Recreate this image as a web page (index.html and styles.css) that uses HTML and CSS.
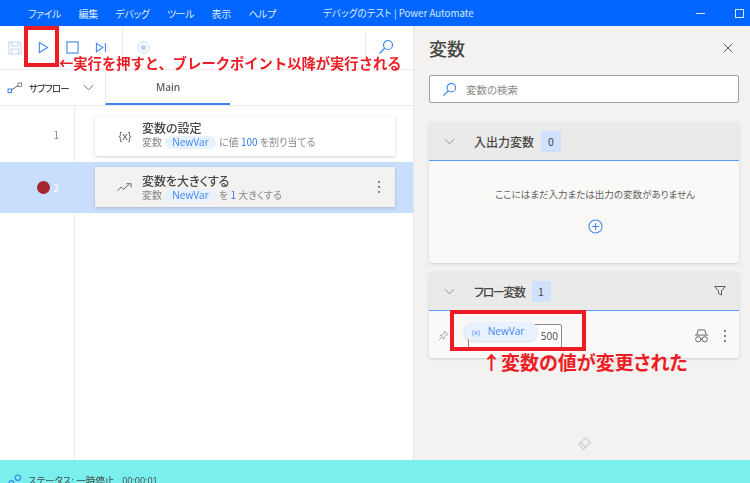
FILE: index.html
```html
<!DOCTYPE html>
<html lang="ja">
<head>
<meta charset="utf-8">
<title>デバッグのテスト | Power Automate</title>
<link rel="stylesheet" href="styles.css">
</head>
<body>
<div class="app">
  <header class="titlebar">
    <nav class="menu">
      <span>ファイル</span><span>編集</span><span>デバッグ</span><span>ツール</span><span>表示</span><span>ヘルプ</span>
    </nav>
    <div class="doc-title">デバッグのテスト | Power Automate</div>
    <div class="win-btns">
      <span class="win-min"></span>
      <span class="win-max"></span>
    </div>
  </header>
  <div class="main">
    <section class="left">
      <div class="toolbar">
        <div class="tool-group">
          <svg class="ico save" viewBox="0 0 14 14"><path d="M1 1h10l2 2v10H1z M4 1v4h6V1 M3.500 13V8h7v5" fill="none" stroke="#c9d6ea" stroke-width="1.100"/></svg>
          <svg class="ico play" viewBox="0 0 12 14"><path d="M1.500 1.500 10.500 7l-9 5.500z" fill="none" stroke="#3f86f2" stroke-width="1.200"/></svg>
          <svg class="ico stop" viewBox="0 0 14 14"><rect x="1" y="1" width="12" height="12" fill="none" stroke="#3f86f2" stroke-width="1.200"/></svg>
          <svg class="ico step" viewBox="0 0 12 12"><path d="M1 1.500 8 6l-7 4.500z M10.800 1v10" fill="none" stroke="#3f86f2" stroke-width="1.200"/></svg>
        </div>
        <div class="tool-mid">
          <svg class="ico rec" viewBox="0 0 14 14"><circle cx="7" cy="7" r="6" fill="none" stroke="#bcd3f5" stroke-width="1"/><circle cx="7" cy="7" r="3" fill="#bcd3f5"/></svg>
        </div>
        <div class="tool-search">
          <svg class="ico find" viewBox="0 0 16 16"><circle cx="10" cy="6" r="4.500" fill="none" stroke="#3f86f2" stroke-width="1.200"/><path d="M6.700 9.300 1.500 14.500" stroke="#3f86f2" stroke-width="1.300"/></svg>
        </div>
      </div>
      <div class="tabs">
        <div class="subflow">
          <svg class="ico flow" viewBox="0 0 16 12"><rect x="1" y="7" width="3.500" height="3.500" fill="none" stroke="#3f86f2"/><rect x="11" y="1" width="3.500" height="3.500" fill="none" stroke="#8a8886"/><path d="M4.500 8 11 3.500" stroke="#605e5c"/></svg>
          <span class="subflow-label">サブフロー</span>
          <svg class="chev-s" viewBox="0 0 12 7"><path d="M1 1l5 5 5-5" fill="none" stroke="#605e5c"/></svg>
        </div>
        <div class="tab-main">Main</div>
      </div>
      <div class="rows">
        <div class="row">
          <div class="num">1</div>
          <div class="cell">
            <div class="card">
              <span class="card-ico">{x}</span>
              <div class="card-text">
                <div class="card-title">変数の設定</div>
                <div class="card-sub">変数 <span class="pill">NewVar</span> に値 <b>100</b> を割り当てる</div>
              </div>
            </div>
          </div>
        </div>
        <div class="row row-sel">
          <div class="num"><i class="bp"></i>2</div>
          <div class="cell">
            <div class="card card-sel">
              <svg class="card-svg" viewBox="0 0 16 10"><path d="M.500 9l4-4 2.500 2.500L13 2 M10 1.500h5v4" fill="none" stroke="#605e5c"/></svg>
              <div class="card-text">
                <div class="card-title">変数を大きくする</div>
                <div class="card-sub">変数 <span class="pill">NewVar</span> を <b>1</b> 大きくする</div>
              </div>
              <span class="dots"><i></i><i></i><i></i></span>
            </div>
          </div>
        </div>
        <div class="row-rest">
          <div class="gutter"></div>
        </div>
      </div>
    </section>
    <aside class="right">
      <div class="panel-head">
        <h1>変数</h1>
        <svg class="close" viewBox="0 0 10 10"><path d="M.500.500l9 9M9.500.500l-9 9" stroke="#605e5c"/></svg>
      </div>
      <div class="search">
        <svg class="search-ico" viewBox="0 0 16 16"><circle cx="10" cy="6" r="4.500" fill="none" stroke="#3f86f2" stroke-width="1.200"/><path d="M6.700 9.300 1.500 14.500" stroke="#3f86f2" stroke-width="1.300"/></svg>
        <span>変数の検索</span>
      </div>
      <div class="sect">
        <div class="sect-head">
          <svg class="chev" viewBox="0 0 12 7"><path d="M1 1l5 5 5-5" fill="none" stroke="#8a8886"/></svg>
          <span class="sect-title">入出力変数</span>
          <span class="count">0</span>
        </div>
        <div class="sect-empty">
          <p>ここにはまだ入力または出力の変数がありません</p>
          <svg class="plus" viewBox="0 0 16 16"><circle cx="8" cy="8" r="7" fill="none" stroke="#3f86f2" stroke-width="1.100"/><path d="M8 4.500v7M4.500 8h7" stroke="#3f86f2" stroke-width="1.100"/></svg>
        </div>
      </div>
      <div class="sect sect-flow">
        <div class="sect-head">
          <svg class="chev" viewBox="0 0 12 7"><path d="M1 1l5 5 5-5" fill="none" stroke="#8a8886"/></svg>
          <span class="sect-title sect-title-tight">フロー変数</span>
          <span class="count count-flow">1</span>
          <svg class="filter" viewBox="0 0 12 10"><path d="M.700.500h10.600L7.500 5v4l-3-1.500V5z" fill="none" stroke="#605e5c"/></svg>
        </div>
        <div class="var-row">
          <svg class="pin" viewBox="0 0 12 12"><path d="M7 1l4 4-2 .500-2 2-.500 2.500L2.500 6 5 5.500l2-2zM4 8l-3 3" fill="none" stroke="#a19f9d"/></svg>
          <div class="var-value">
            <span class="value-box">500</span>
            <span class="var-chip"><em>(x)</em>NewVar</span>
          </div>
          <svg class="spy" viewBox="0 0 16 15"><path d="M3 6l1.500-5h7L13 6M1 6.500h14" fill="none" stroke="#605e5c"/><circle cx="4.500" cy="11" r="2.800" fill="none" stroke="#605e5c"/><circle cx="11.500" cy="11" r="2.800" fill="none" stroke="#605e5c"/><path d="M7.300 11h1.400" stroke="#605e5c"/></svg>
          <span class="dots dots-var"><i></i><i></i><i></i></span>
        </div>
      </div>
      <svg class="eraser" viewBox="0 0 14 14"><path d="M1.500 8 8 1.500 12.500 6 6 12.500z M3.500 6l4.500 4.500" fill="none" stroke="#d2d0ce" stroke-width="1.200"/></svg>
    </aside>
  </div>
  <footer class="status">
    <svg class="status-ico" viewBox="0 0 12 10"><circle cx="3" cy="7.500" r="2" fill="none" stroke="#3f86f2"/><circle cx="8.500" cy="3" r="2.300" fill="none" stroke="#3f86f2"/></svg>
    <span>ステータス: 一時停止</span><span class="time">00:00:01</span>
  </footer>

  <div class="mark mark-play"></div>
  <div class="note note-play">←実行を押すと、ブレークポイント以降が実行される</div>
  <div class="mark mark-var"></div>
  <div class="note note-var">↑変数の値が変更された</div>
</div>
</body>
</html>
```
FILE: styles.css
```css
* { box-sizing: border-box; }
html, body { margin: 0; padding: 0; }
body {
  font-family: "Noto Sans CJK JP", "Noto Sans", sans-serif;
  font-feature-settings: "palt";
  color: #323130;
  background: #fff;
}
.app {
  position: relative;
  width: 750px;
  height: 483px;
  overflow: hidden;
  display: flex;
  flex-direction: column;
  filter: blur(0.35px);
}

/* title bar */
.titlebar {
  height: 26px;
  flex: none;
  background: #0066ff;
  color: #dce9ff;
  font-size: 10px;
  display: flex;
  align-items: center;
  position: relative;
}
.menu { display: flex; gap: 17.500px; padding-left: 28px; letter-spacing: -.4px; }
.menu span { white-space: nowrap; }
.doc-title { margin-left: 47px; white-space: nowrap; font-size: 9.700px; }
.win-btns { margin-left: auto; display: flex; align-items: center; gap: 30px; padding-right: 6px; }
.win-min { width: 9px; height: 1px; background: #dce9ff; }
.win-max { width: 9px; height: 9px; border: 1px solid #dce9ff; }

.main { flex: 1; display: flex; min-height: 0; }

/* left */
.left { width: 414px; flex: none; display: flex; flex-direction: column; border-right: 1px solid #e8e6e4; }
.toolbar { height: 44px; flex: none; display: flex; align-items: stretch; background: #fff; border-bottom: 1px solid #edebe9; }
.tool-group { width: 123px; display: flex; align-items: center; border-right: 1px solid #edebe9; position: relative; }
.ico { display: block; flex: none; }
.save { width: 14px; height: 14px; margin-left: 8px; }
.play { width: 11px; height: 13px; margin-left: 16px; }
.stop { width: 13px; height: 13px; margin-left: 17px; }
.step { width: 12px; height: 11px; margin-left: 16px; }
.tool-mid { flex: 1; display: flex; align-items: center; padding-left: 14px; }
.rec { width: 13px; height: 13px; }
.tool-search { width: 48px; display: flex; align-items: flex-start; justify-content: center; border-left: 1px solid #edebe9; margin: 6px 0 0; padding: 7px 8px 0 0; }
.find { width: 16px; height: 16px; }

.tabs { height: 36px; flex: none; display: flex; border-bottom: 1px solid #edebe9; }
.subflow { width: 105px; display: flex; align-items: center; padding-left: 7px; }
.flow { width: 16px; height: 12px; }
.subflow-label { font-size: 9.500px; letter-spacing: -.8px; color: #484644; margin-left: 6px; white-space: nowrap; font-weight: 500; }
.chev-s { width: 11px; height: 7px; margin-left: 14px; }
.tab-main { width: 125px; text-align: center; font-size: 10px; font-family: "Open Sans", sans-serif; font-weight: 600; color: #605e5c; border-bottom: 2px solid #3f86f2; border-left: 1px solid #edebe9; line-height: 35px; }

.rows { flex: 1; display: flex; flex-direction: column; min-height: 0; }
.row { display: flex; height: 56px; }
.row-sel { height: 51px; background: #c9defc; }
.num { width: 75px; flex: none; border-right: 1px solid #edebe9; padding-right: 15px; font-size: 10px; color: #8a8886; display: flex; align-items: center; justify-content: flex-end; gap: 3px; }
.row-sel .num { color: #fff; border-right-color: #c9defc; }
.bp { width: 13px; height: 13px; border-radius: 50%; background: #a4262c; }
.cell { flex: 1; padding-top: 10px; padding-left: 20px; padding-right: 18px; }
.row-sel .cell { padding-top: 5px; }
.card { height: 40px; background: #fff; box-shadow: 0 1px 3px rgba(0,0,0,.18); display: flex; align-items: center; position: relative; }
.card-sel { background: #f3f2f1; }
.card-ico { width: 47px; flex: none; text-align: center; font-size: 11px; color: #605e5c; padding-left: 13px; font-family: "Liberation Sans", sans-serif; }
.card-svg { width: 15px; height: 10px; margin-left: 22px; margin-right: 10px; flex: none; }
.card-text { margin-top: -3px; }
.card-sel .card-text { margin-top: 0; }
.card-title { font-size: 12px; line-height: 15px; color: #484644; font-weight: 500; white-space: nowrap; }
.card-sub { font-size: 10px; line-height: 14px; color: #8a8886; white-space: nowrap; }
.card-sub b { font-weight: 400; color: #2f7be8; }
.pill { display: inline-block; background: #e8f1fe; color: #3f86f2; border-radius: 7px; padding: 0 7px; margin: 0 1px; font-family: "Open Sans", sans-serif; font-size: 10px; line-height: 13px; }
.dots { display: flex; flex-direction: column; gap: 3px; }
.dots i { width: 2px; height: 2px; background: #605e5c; display: block; border-radius: 50%; }
.card .dots { position: absolute; right: 15px; top: 14px; }
.row-rest { flex: 1; display: flex; }
.gutter { width: 75px; border-right: 1px solid #edebe9; }

/* right */
.right { flex: 1; background: #f3f2f1; padding: 0 11px 0 15px; position: relative; display: flex; flex-direction: column; }
.panel-head { height: 49px; display: flex; align-items: center; justify-content: space-between; padding: 0 6px 6px 0; }
.panel-head h1 { margin: 0; font-size: 18px; font-weight: 500; color: #484644; }
.close { width: 10px; height: 10px; }
.search { height: 28px; background: #fff; border: 1px solid #a19f9d; border-radius: 2px; display: flex; align-items: center; padding-left: 12px; font-size: 10.500px; color: #8a8886; }
.search-ico { width: 15px; height: 15px; margin-right: 9px; }
.sect { margin-top: 19px; background: #faf9f8; border-radius: 3px; box-shadow: 0 1px 3px rgba(0,0,0,.15); }
.sect-head { height: 39px; background: #ebeaea; border-bottom: 1px solid #5c9cf7; border-radius: 3px 3px 0 0; display: flex; align-items: center; padding-left: 15px; position: relative; }
.chev { width: 11px; height: 7px; flex: none; }
.sect-title { font-size: 12px; font-weight: 500; color: #484644; margin-left: 19px; white-space: nowrap; }
.sect-title-tight { letter-spacing: -1.400px; }
.count { background: #cfe1fb; width: 20px; height: 21px; margin-left: 7px; font-size: 10.500px; display: flex; align-items: center; justify-content: center; color: #484644; }
.count-flow { width: 19px; margin-left: 7px; }
.sect-empty { height: 102px; text-align: center; padding: 25px 0 0 22px; }
.sect-empty p { margin: 0; font-size: 9.500px; line-height: 16px; color: #605e5c; }
.plus { width: 15px; height: 15px; margin-top: 17px; }
.sect-flow { margin-top: 9px; }
.filter { width: 12px; height: 10px; position: absolute; right: 13px; top: 14px; }
.var-row { height: 47px; display: flex; align-items: center; padding: 0 13px 0 9px; position: relative; }
.pin { width: 11px; height: 11px; flex: none; margin-top: 2px; }
.var-value { width: 107px; height: 24px; position: relative; margin-left: 15px; margin-top: 3px; flex: none; }
.value-box { position: absolute; right: 9px; top: 0; width: 94px; height: 24px; border: 1px solid #8a8886; font-size: 10px; font-family: "Open Sans", sans-serif; text-align: right; padding-right: 3px; line-height: 22px; color: #484644; border-radius: 2px; background: #fff; }
.var-chip { position: absolute; left: 0; top: -2px; width: 74px; height: 19px; border-radius: 10px; background: #e8f1fe; box-shadow: 0 1px 3px rgba(0,0,0,.15); color: #3f86f2; font-family: "Open Sans", sans-serif; font-size: 10px; line-height: 19px; padding-left: 8px; white-space: nowrap; }
.var-chip em { font-style: normal; font-size: 7px; margin-right: 8px; }
.spy { width: 15px; height: 14px; margin-left: auto; margin-top: 2px; }
.dots-var { margin-left: 15px; margin-top: 2px; }
.eraser { width: 15px; height: 15px; position: absolute; left: 163px; top: 410px; }

/* status */
.status { height: 23px; flex: none; background: #79efee; display: flex; align-items: center; padding: 17px 0 0 8px; font-size: 9.500px; color: #484644; }
.status-ico { width: 14px; height: 12px; margin-right: 6px; flex: none; }
.status span { white-space: nowrap; }
.time { margin-left: 8px; font-family: "Open Sans", sans-serif; font-size: 9px; }

/* annotations */
.mark { position: absolute; border: 4px solid #ee1c25; }
.mark-play { left: 24px; top: 26px; width: 35px; height: 41px; }
.mark-var { left: 450px; top: 310px; width: 136px; height: 41px; }
.note { position: absolute; color: #ee1c25; font-weight: 700; white-space: nowrap; }
.note-play { left: 59px; top: 53px; font-size: 14.300px; line-height: 20px; font-feature-settings: normal; }
.note-var { left: 482px; top: 349px; font-size: 19px; line-height: 26px; }
```
